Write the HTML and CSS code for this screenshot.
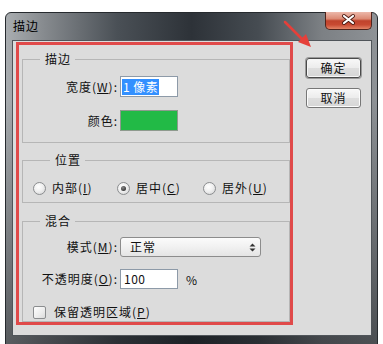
FILE: index.html
```html
<!DOCTYPE html>
<html lang="zh-CN">

<head>
    <meta charset="UTF-8">
    <title>描边</title>
    <link rel="stylesheet" href="styles.css">
</head>

<body>
    <div class="window">
        <div class="titlebar">
            <span class="title">描边</span>
            <div class="close">
                <svg width="47" height="18" viewBox="0 0 47 18">
                    <path d="M19 5 L28 12 M28 5 L19 12" stroke="#4a1a12" stroke-width="4" stroke-linecap="round" />
                    <path d="M19 5 L28 12 M28 5 L19 12" stroke="#fff" stroke-width="2.2" stroke-linecap="round" />
                </svg>
            </div>
        </div>

        <div class="client">
            <!-- settings panel (red outline as in the screenshot) -->
            <div class="main">
                <fieldset class="group group-stroke">
                    <legend>描边</legend>
                    <div class="row">
                        <span class="label">宽度(<u>W</u>):</span>
                        <div class="field"><span class="selected">1 像素</span></div>
                    </div>
                    <div class="row row-next">
                        <span class="label">颜色:</span>
                        <div class="swatch"></div>
                    </div>
                </fieldset>

                <fieldset class="group group-position">
                    <legend>位置</legend>
                    <div class="radios">
                        <label class="radio radio-inside"><span class="circle"></span>内部(<u>I</u>)</label>
                        <label class="radio radio-center"><span class="circle checked"></span>居中(<u>C</u>)</label>
                        <label class="radio"><span class="circle"></span>居外(<u>U</u>)</label>
                    </div>
                </fieldset>

                <fieldset class="group group-blend">
                    <legend>混合</legend>
                    <div class="row row-select">
                        <span class="label">模式(<u>M</u>):</span>
                        <div class="select">
                            <span>正常</span>
                            <svg width="7" height="9" viewBox="0 0 7 9">
                                <path d="M0.5 3.5 L3.5 0.5 L6.5 3.5 Z M0.5 5.5 L3.5 8.5 L6.5 5.5 Z" fill="#333" />
                            </svg>
                        </div>
                    </div>
                    <div class="row row-opacity">
                        <span class="label">不透明度(<u>O</u>):</span>
                        <div class="field">100</div>
                        <span class="unit">%</span>
                    </div>
                    <label class="check"><span class="box"></span>保留透明区域(<u>P</u>)</label>
                </fieldset>
            </div>

            <div class="buttons">
                <button class="btn btn-default">确定</button>
                <button class="btn">取消</button>
            </div>
        </div>
    </div>

    <svg class="arrow" width="32" height="32" viewBox="0 0 32 32">
        <path d="M2 4 L20 22" stroke="#e5403a" stroke-width="2.5" stroke-linecap="round" />
        <path d="M15 24 L28 29 L23 16 Z" fill="#e5403a" />
    </svg>
</body>

</html>
```

FILE: styles.css
```css
body {
    margin: 0;
    padding: 12px 0 0 5px;
    height: 344px;
    box-sizing: border-box;
    overflow: hidden;
    position: relative;
    background-color: white;
    font-family: "Noto Sans CJK SC", sans-serif;
    font-size: 12px;
    letter-spacing: 1px;
    color: #111;
}

.window {
    width: 373px;
    height: 345px;
    box-sizing: border-box;
    padding: 0 5px 0 6px;
    border: 1px solid #262a2e;
    border-radius: 6px 6px 0 0;
    background:
        linear-gradient(180deg, rgba(0, 0, 0, 0) 0%, rgba(0, 0, 0, 0) 25%, rgba(15, 18, 22, 0.55) 100%),
        linear-gradient(90deg, #a9adb0 0%, #878b8f 10%, #4a5056 30%, #2d3238 50%, #464c52 68%, #7c8084 85%, #8e9296 100%);
}

.titlebar {
    height: 27px;
    display: flex;
    justify-content: space-between;
    align-items: flex-start;
}

.title {
    padding: 6px 0 0 1px;
    line-height: 14px;
    color: #000;
}

.close {
    width: 47px;
    height: 18px;
    margin-top: -1px;
    box-sizing: border-box;
    border: 1px solid #50241c;
    border-top: none;
    border-radius: 0 0 5px 5px;
    background: linear-gradient(180deg, #ecb8aa 0%, #dc8a74 40%, #c0432c 52%, #c84a32 75%, #e28466 100%);
    overflow: hidden;
}

.close svg {
    display: block;
    margin: -1px 0 0 -1px;
}

.client {
    height: 296px;
    box-sizing: border-box;
    display: flex;
    align-items: flex-start;
    padding: 1px 0 0 3px;
    background-color: #dcdcdc;
    border: 1px solid #50555a;
}

.main {
    width: 277px;
    box-sizing: border-box;
    padding: 7px 0 0 3px;
    border: 3px solid #e04a4a;
}

.group {
    margin: 0;
    padding: 0;
    min-width: 0;
    border: 1px solid #b6b6b6;
}

.group legend {
    margin-left: 17px;
    padding: 0 4px 0 5px;
    line-height: 14px;
    background-color: #dcdcdc;
}

.group-stroke {
    padding: 10px 0 11px;
}

.group-position {
    margin-top: 10px;
    padding: 13px 0 6px 10px;
}

.group-blend {
    margin-top: 11px;
    padding: 9px 0 1px;
}

.row {
    display: flex;
    align-items: center;
    height: 21px;
}

.row-next {
    margin-top: 13px;
}

.row-select {
    height: 20px;
}

.row-opacity {
    height: 20px;
    margin-top: 12px;
}

.label {
    width: 95px;
    margin-right: 2px;
    text-align: right;
    line-height: 14px;
    white-space: nowrap;
}

.field {
    width: 58px;
    height: 100%;
    box-sizing: border-box;
    padding: 0 3px;
    display: flex;
    align-items: center;
    background-color: white;
    border: 1px solid #8d9aa8;
    line-height: 14px;
    letter-spacing: 0.5px;
}

.selected {
    margin-left: -2px;
    padding: 1px 1px;
    background-color: #3390ff;
    color: white;
}

.swatch {
    width: 58px;
    height: 21px;
    box-sizing: border-box;
    background-color: #22ba46;
    border: 1px solid #8e9a8e;
}

.unit {
    margin-left: 8px;
}

.radios {
    display: flex;
    height: 16px;
    align-items: center;
}

.radio,
.check {
    display: flex;
    align-items: center;
    line-height: 14px;
    white-space: nowrap;
}

.radio-inside {
    width: 84px;
}

.radio-center {
    width: 86px;
}

.circle {
    width: 13px;
    height: 13px;
    box-sizing: border-box;
    margin-right: 6px;
    border: 1px solid #8b8d8f;
    border-radius: 50%;
    background: radial-gradient(circle at 40% 35%, #ffffff 0%, #f0f0f0 45%, #cfd0d1 100%);
    display: flex;
    align-items: center;
    justify-content: center;
}

.circle.checked::after {
    content: "";
    width: 5px;
    height: 5px;
    border-radius: 50%;
    background: radial-gradient(circle at 40% 35%, #8a8a8a 0%, #3a3a3a 70%);
}

.select {
    width: 141px;
    height: 20px;
    box-sizing: border-box;
    padding: 0 4px 0 9px;
    display: flex;
    align-items: center;
    justify-content: space-between;
    border: 1px solid #8c8c8c;
    border-radius: 3px;
    background: linear-gradient(180deg, #fbfbfb 0%, #f1f1f1 50%, #e4e4e4 100%);
    line-height: 14px;
}

.check {
    height: 16px;
    margin: 15px 0 0 10px;
}

.box {
    width: 13px;
    height: 13px;
    box-sizing: border-box;
    margin-right: 8px;
    border: 1px solid #8b8d8f;
    border-radius: 2px;
    background: linear-gradient(135deg, #ffffff 0%, #ececec 60%, #dadada 100%);
}

.buttons {
    margin: 16px 0 0 13px;
    display: flex;
    flex-direction: column;
    gap: 10px;
}

.btn {
    width: 55px;
    height: 20px;
    padding: 0;
    font-family: inherit;
    font-size: 12px;
    letter-spacing: 1px;
    line-height: 14px;
    color: #111;
    border: 1px solid #777;
    border-radius: 3px;
    background: linear-gradient(180deg, #f8f8f8 0%, #ececec 50%, #dedede 51%, #d6d6d6 100%);
    box-shadow: inset 0 0 0 1px #fcfcfc;
}

.btn-default {
    border-color: #4a4a4a;
    box-shadow: inset 0 0 0 1px #f6f6f6, 0 0 0 1px #9a9a9a;
}

.arrow {
    position: absolute;
    left: 283px;
    top: 18px;
}
```
